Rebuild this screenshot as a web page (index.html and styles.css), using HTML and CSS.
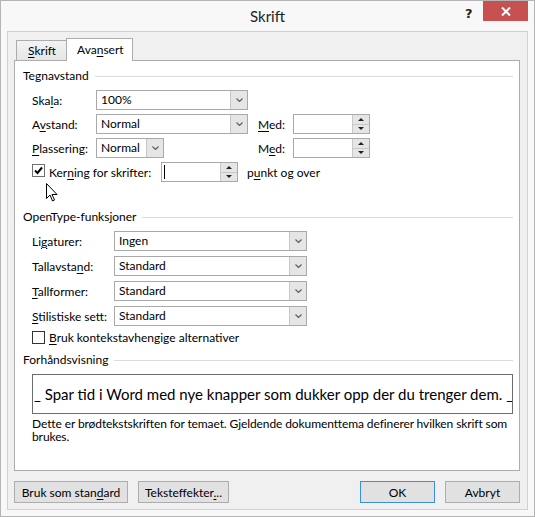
FILE: index.html
```html
<!DOCTYPE html>
<html lang="nb">

<head>
    <meta charset="UTF-8">
    <meta name="viewport" content="width=device-width, initial-scale=1.0">
    <title>Skrift</title>
    <link rel="stylesheet" href="styles.css">
</head>

<body>
    <div class="window">
        <div class="titlebar">
            <span class="title">Skrift</span>
            <span class="help">?</span>
            <span class="close">
                <svg width="10" height="9" viewBox="0 0 10 9"><path d="M1 0.5 L9 8.5 M9 0.5 L1 8.5" stroke="#fff" stroke-width="2"/></svg>
            </span>
        </div>

        <div class="client">
            <div class="tabs">
                <div class="tab"><u>S</u>krift</div>
                <div class="tab active">Ava<u>n</u>sert</div>
            </div>

            <div class="panel">
                <!-- Tegnavstand -->
                <div class="group-head"><span>Tegnavstand</span></div>

                <div class="row first">
                    <label class="lbl w64">Ska<u>l</u>a:</label>
                    <div class="combo w152"><span class="val">100%</span><span class="drop"></span></div>
                </div>
                <div class="row">
                    <label class="lbl w64">A<u>v</u>stand:</label>
                    <div class="combo w152"><span class="val">Normal</span><span class="drop"></span></div>
                    <label class="lbl med"><u>M</u>ed:</label>
                    <div class="spin"><span class="val"></span><span class="arrows"><i class="up"></i><i class="down"></i></span></div>
                </div>
                <div class="row">
                    <label class="lbl w64"><u>P</u>lassering:</label>
                    <div class="combo w68"><span class="val">Normal</span><span class="drop"></span></div>
                    <div class="spacer84"></div>
                    <label class="lbl med">M<u>e</u>d:</label>
                    <div class="spin"><span class="val"></span><span class="arrows"><i class="up"></i><i class="down"></i></span></div>
                </div>
                <div class="row kernrow">
                    <span class="check on"></span>
                    <label class="lbl kern">Ker<u>n</u>ing for skrifter:</label>
                    <div class="spin"><span class="val"><span class="caret"></span></span><span class="arrows"><i class="up"></i><i class="down"></i></span></div>
                    <label class="lbl after">p<u>u</u>nkt og over</label>
                </div>

                <!-- OpenType -->
                <div class="group-head second"><span>OpenType-funksjoner</span></div>

                <div class="row first wide">
                    <label class="lbl w82">Li<u>g</u>aturer:</label>
                    <div class="combo w193"><span class="val">Ingen</span><span class="drop"></span></div>
                </div>
                <div class="row wide">
                    <label class="lbl w82">Tallavsta<u>n</u>d:</label>
                    <div class="combo w193"><span class="val">Standard</span><span class="drop"></span></div>
                </div>
                <div class="row wide">
                    <label class="lbl w82"><u>T</u>allformer:</label>
                    <div class="combo w193"><span class="val">Standard</span><span class="drop"></span></div>
                </div>
                <div class="row wide">
                    <label class="lbl w82"><u>S</u>tilistiske sett:</label>
                    <div class="combo w193"><span class="val">Standard</span><span class="drop"></span></div>
                </div>
                <div class="row checkrow">
                    <span class="check"></span>
                    <label class="lbl"><u>B</u>ruk kontekstavhengige alternativer</label>
                </div>

                <!-- Forhåndsvisning -->
                <div class="group-head third"><span>Forhåndsvisning</span></div>
                <div class="preview">_ Spar tid i Word med nye knapper som dukker opp der du trenger dem. _</div>
                <p class="note">Dette er brødtekstskriften for temaet. Gjeldende dokumenttema definerer hvilken skrift som brukes.</p>

                <!-- musepeker over avkrysningsboksen -->
                <svg class="pointer" width="12" height="19" viewBox="0 0 12 19">
                    <path d="M0.5 0.5 L0.5 15.5 L4 12 L6.5 18 L8.5 17 L6 11.5 L11 11.5 Z" fill="#fff" stroke="#000" stroke-width="1"/>
                </svg>
            </div>

            <div class="buttons">
                <button class="btn">Bruk som stan<u>d</u>ard</button>
                <button class="btn effects">Teksteffekter<u>.</u>..</button>
                <span class="grow"></span>
                <button class="btn default">OK</button>
                <button class="btn">Avbryt</button>
            </div>
        </div>
    </div>
</body>

</html>
```

FILE: styles.css
```css
body {
    margin: 0;
    font-family: Lato, "Noto Sans", sans-serif;
    font-size: 12px;
    color: #000;
}

u {
    text-decoration-thickness: 1px;
    text-underline-offset: 2px;
}

.window {
    width: 533px;
    height: 515px;
    border: 1px solid #b5b5b5;
    background: #f8f8f8;
    display: flex;
    flex-direction: column;
}

.titlebar {
    height: 30px;
    position: relative;
    display: flex;
    justify-content: center;
}

.title {
    font-size: 15px;
    line-height: 30px;
    color: #222;
}

.help {
    position: absolute;
    left: 464px;
    top: 5px;
    font-family: "DejaVu Sans", sans-serif;
    font-weight: bold;
    font-size: 13px;
    color: #222;
}

.close {
    position: absolute;
    left: 482px;
    top: 0;
    width: 45px;
    height: 20px;
    background: #c75050;
    display: flex;
    align-items: center;
    justify-content: center;
}

.client {
    margin: 0 6px 6px 6px;
    flex: 1;
    border: 1px solid #d0d0d0;
    background: #f0f0f0;
    padding: 7px 7px 0 6px;
    display: flex;
    flex-direction: column;
}

.tabs {
    display: flex;
    align-items: flex-end;
    margin-left: 2px;
    height: 21px;
    position: relative;
    z-index: 1;
}

.tab {
    height: 19px;
    line-height: 19px;
    padding: 0 9px 0 11px;
    border: 1px solid #acacac;
    border-bottom: none;
    background: linear-gradient(#f3f3f3, #e6e6e6);
    width: 29px;
}

.tab.active {
    height: 22px;
    line-height: 21px;
    width: 45px;
    padding: 0 10px;
    margin-left: -1px;
    margin-bottom: -1px;
    background: #fff;
}

.panel {
    position: relative;
    height: 409px;
    border: 1px solid #acacac;
    background: #fff;
    padding: 0 6px 0 8px;
}

.group-head {
    display: flex;
    align-items: center;
    height: 16px;
    line-height: 16px;
    margin-top: 7px;
}

.group-head::after {
    content: "";
    flex: 1;
    border-top: 1px solid #dcdcdc;
    margin-left: 6px;
}

.group-head.second {
    margin-top: 27px;
}

.group-head.third {
    margin-top: 7px;
}

.row {
    display: flex;
    align-items: center;
    height: 20px;
    margin-top: 4px;
    padding-left: 9px;
}

.row.first {
    margin-top: 6px;
}

.row.wide {
    margin-top: 5px;
}

.row.wide.first {
    margin-top: 6px;
}

.lbl {
    white-space: nowrap;
}

.w64 { width: 64px; }
.w82 { width: 82px; }

.med {
    width: 35px;
    margin-left: 10px;
}

.spacer84 {
    width: 84px;
}

.combo {
    height: 18px;
    border: 1px solid #a9a9a9;
    display: flex;
    background: #fff;
}

.w152 { width: 150px; }
.w68 { width: 66px; }
.w193 { width: 191px; }

.combo .val {
    flex: 1;
    padding-left: 4px;
    line-height: 18px;
}

.drop {
    width: 16px;
    border-left: 1px solid #c8c8c8;
    background: #e5e5e5 url("data:image/svg+xml,%3Csvg xmlns='http://www.w3.org/2000/svg' width='7' height='4'%3E%3Cpath d='M0.5 0.5 L3.5 3.5 L6.5 0.5' fill='none' stroke='%23606060' stroke-width='1.2'/%3E%3C/svg%3E") no-repeat center;
}

.spin {
    width: 75px;
    height: 18px;
    border: 1px solid #a9a9a9;
    display: flex;
    background: #fff;
}

.spin .val {
    flex: 1;
    position: relative;
}

.caret {
    position: absolute;
    left: 2px;
    top: 2px;
    width: 1px;
    height: 14px;
    background: #000;
}

.arrows {
    width: 16px;
    display: flex;
    flex-direction: column;
    border-left: 1px solid #c8c8c8;
}

.arrows i {
    flex: 1;
    background: #e5e5e5;
    position: relative;
}

.arrows i.up {
    border-bottom: 1px solid #c8c8c8;
}

.arrows i::after {
    content: "";
    position: absolute;
    left: 5px;
    top: 3px;
    border-left: 3px solid transparent;
    border-right: 3px solid transparent;
}

.arrows i.up::after {
    border-bottom: 3px solid #222;
}

.arrows i.down::after {
    top: 2px;
    border-top: 3px solid #222;
}

.check {
    width: 11px;
    height: 11px;
    border: 1px solid #333;
    background: #fff;
    margin-right: 4px;
    flex: none;
}

.kernrow .check {
    margin-top: -4px;
}

.check.on {
    border-color: #707070;
    background: #fff url("data:image/svg+xml,%3Csvg xmlns='http://www.w3.org/2000/svg' width='11' height='11'%3E%3Cpath d='M2 5.5 L4.5 8 L9 2.5' fill='none' stroke='%23000' stroke-width='2'/%3E%3C/svg%3E") no-repeat center;
}

.kern {
    width: 112px;
}

.after {
    margin-left: 9px;
}

.checkrow {
    height: 16px;
    margin-top: 3px;
}

.preview {
    margin: 6px 0 0 9px;
    height: 38px;
    border: 1px solid #6d6d6d;
    font-size: 15px;
    line-height: 38px;
    white-space: nowrap;
    overflow: hidden;
    padding-left: 1px;
}

.note {
    margin: 3px -4px 0 9px;
    line-height: 13px;
    letter-spacing: -0.1px;
}

.pointer {
    position: absolute;
    left: 31px;
    top: 122px;
}

.buttons {
    display: flex;
    margin-top: 10px;
    gap: 10px;
}

.grow {
    flex: 1;
}

.btn {
    font: inherit;
    height: 22px;
    padding: 0;
    border: 1px solid #adadad;
    background: #e1e1e1;
    color: #000;
    width: 114px;
}

.btn.effects {
    width: 91px;
}

.btn.default {
    border-color: #3c8de0;
    width: 75px;
}

.btn:last-child {
    width: 75px;
}
```
